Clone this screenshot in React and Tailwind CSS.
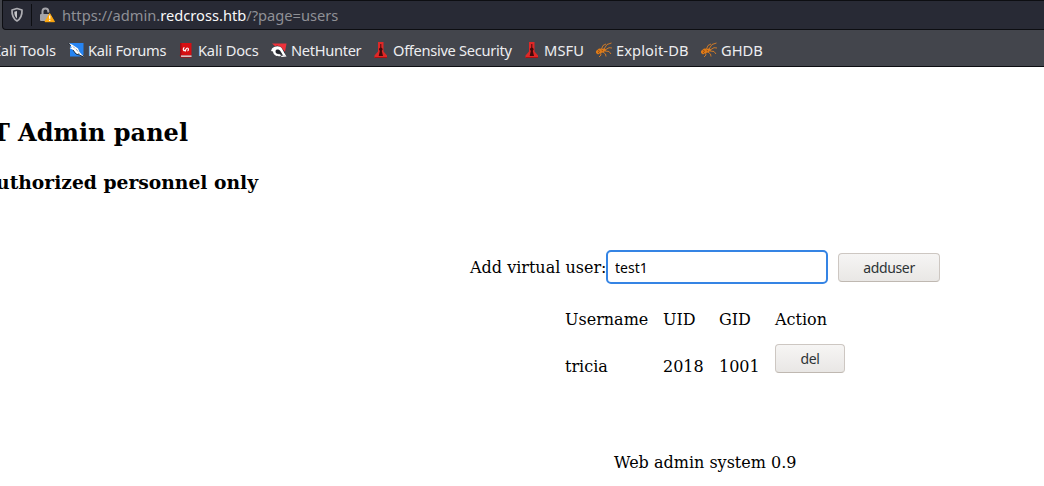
const DragonIcon = () => (
  <svg width="16" height="16" viewBox="0 0 16 16">
    <path d="M2 1h13.500v11.500l-2 2H2z" fill="#2684f2" />
    <path d="M0 1l4 1.500 6 4 1.500 3.500L16 15l-4.500-2.300-3.500-1-3-4-3.500-1.700 2.500-.5L0 1z" fill="#fff" />
    <path d="M0 1.200l3 2.600M5 8l3 4 3.500 1L15.500 15" stroke="#1b2430" strokeWidth=".9" fill="none" />
    <path d="M5 4.500l2 2M8 7l2 2.500M10 11l2 1.500" stroke="#62717f" strokeWidth=".7" fill="none" />
  </svg>
);

const DocsIcon = () => (
  <svg width="16" height="16" viewBox="0 0 16 16">
    <path d="M2 1h11.500v12.500H2z" fill="#d70f13" />
    <path d="M2 1h1.500v12.500H2z" fill="#9d0d16" />
    <path d="M3 13.500h10.500v1.500H3z" fill="#eee1e1" />
    <path d="M2 13.500l1 1.800h10.500" stroke="#b20b12" strokeWidth=".8" fill="none" />
    <path d="M6.500 5.500C4.800 6 5 8.800 6.600 8.600 8.200 8.400 7.800 6 9.200 6c1.600 0 1.600 2.700.2 3M8 9.200L6.500 8" stroke="#fff" strokeWidth="1.200" fill="none" />
  </svg>
);

const HunterIcon = () => (
  <svg width="16" height="16" viewBox="0 0 16 16">
    <path d="M1 1.500h14.500l-2 11z" fill="#ee323b" />
    <path d="M3 5l3-1.500 4 1.500 4 5v3l-4-1-5-1z" fill="#23252c" />
    <path d="M1 6.500C5 3 10 4 11.500 7.500L14.500 13l-2.300.8-2.500-4.300C8 6.800 4.500 7.200 4.500 9.500c0 2.200 2 3 4.500 2.700l1 1.800c-4.200.8-7.700-.8-8-4.500L0 9z" fill="#fff" />
    <path d="M10 14l4.500-1 1 1.500-5 .5z" fill="#fff" />
  </svg>
);

const TowerIcon = () => (
  <svg width="16" height="16" viewBox="0 0 16 16">
    <path d="M5 0h5.500v9.500l3.500 4V16H1.500v-2.500L5 9.500z" fill="#df2827" />
    <path d="M7.300 2h1v3.500l1.500 1.500-1 2 1.200 5H5.700l1.100-5-1-2 1.500-1.500z" fill="#430909" />
    <path d="M1.500 15.500H14" stroke="#aa1013" />
  </svg>
);

const BugIcon = () => (
  <svg width="16" height="16" viewBox="0 0 16 16" fill="none">
    <path d="M0 9l3-2.500 3 .2 3-.2 1 2-3 2-3 .7L2 12.500 0 11z" fill="#dd7b19" />
    <path d="M5.500 7L7 3.500 10 2M8 7l3-4.500 4.500-1.500M9 8l4-2.300 3 .3M9 9l4 .5 2 2.500M7 10l2.500 2 .5 2.500M4.500 10.500l.5 2.500-2 2" stroke="#dd7f24" strokeWidth=".9" />
    <path d="M2 8.500l2 1M5.500 8l1.500 1M2 11l1-1" stroke="#8c430c" strokeWidth=".8" />
  </svg>
);

const ShieldIcon = () => (
  <svg width="14" height="16" viewBox="0 0 14 16" fill="none">
    <path d="M7 1.500L12 3c.2 5-.8 8.500-5 11C2.800 11.500 1.800 8 2 3z" stroke="#aeaeb3" strokeWidth="1.700" strokeLinejoin="round" />
    <path d="M7 4v7.500C5 10 4.300 8 4.300 4.700z" fill="#c4c4c7" />
  </svg>
);

const LockIcon = () => (
  <svg width="16" height="16" viewBox="0 0 16 16" fill="none">
    <path d="M3.500 8V4.300a2.900 2.900 0 015.800 0V5.500" stroke="#a5a5aa" strokeWidth="2" />
    <path d="M2 7h8v7H2a1 1 0 01-1-1V8a1 1 0 011-1z" fill="#a5a5aa" />
    <path d="M10.700 6.500L15.500 14.700H6z" fill="#ffa910" stroke="#ffa910" strokeLinejoin="round" />
    <path d="M10.700 8.500v3.200M10.700 12.700v1.400" stroke="#fff" strokeWidth="1.300" />
  </svg>
);

const bookmarks = [
  { label: "Kali Forums", Icon: DragonIcon, style: "w-[110px] tracking-[-0.25px]" },
  { label: "Kali Docs", Icon: DocsIcon, style: "w-[93px] tracking-[-0.2px]" },
  { label: "NetHunter", Icon: HunterIcon, style: "w-[102px] tracking-[-0.33px]" },
  { label: "Offensive Security", Icon: TowerIcon, style: "w-[151px] tracking-[-0.31px]" },
  { label: "MSFU", Icon: TowerIcon, style: "w-[72px] tracking-[0.1px]" },
  { label: "Exploit-DB", Icon: BugIcon, style: "w-[105px] tracking-[0.1px]" },
  { label: "GHDB", Icon: BugIcon, style: "w-[70px]" },
];

function BrowserChrome() {
  return (
    <header className="flex h-[67px] flex-col border-b border-[#0d0e12] bg-[#43454c] pl-[2px] font-['Noto_Sans',sans-serif] text-[14.67px]">
      <div className="flex h-[30px] shrink-0 items-center rounded-bl-[4px] border border-r-0 border-[#0d0e12] bg-[#282a35] pl-[7px]">
        <ShieldIcon />
        <div className="ml-[7px] h-[22px] w-px bg-[#0d0e12]" />
        <div className="ml-[7px]">
          <LockIcon />
        </div>
        <p className="ml-[7px] whitespace-pre leading-5 text-[#8f9096]">
          https://admin.<span className="text-[#f9f9fa]">redcross.htb</span>/?page=users
        </p>
      </div>
      <nav className="flex h-[36px] items-center pt-[3px] leading-5 text-[#ededf0]">
        <div className="flex w-[54px] shrink-0 justify-end whitespace-nowrap">Kali Tools</div>
        <div className="ml-[12px] flex">
          {bookmarks.map(({ label, Icon, style }) => (
            <a key={label} className={`flex shrink-0 items-center gap-1 whitespace-nowrap ${style}`}>
              <span className="shrink-0 pt-px">
                <Icon />
              </span>
              {label}
            </a>
          ))}
        </div>
      </nav>
    </header>
  );
}

const buttonStyle =
  "h-[29px] rounded-[4px] border border-[#cdc7c2] border-b-[#bfb8b1] bg-linear-to-b from-[#f6f5f4] to-[#e9e7e5] font-['Noto_Sans',sans-serif] text-[14px] tracking-[-0.35px] text-[#2e3436]";

export default function App() {
  return (
    <div className="h-[486px] w-[1044px] overflow-hidden bg-white font-['DejaVu_Serif',serif] text-base text-black">
      <BrowserChrome />
      <main className="pt-[52px]">
        <h2 className="flex w-[188px] justify-end whitespace-nowrap text-[24px] font-bold leading-[28px]">IT Admin panel</h2>
        <h3 className="mt-[24px] flex w-[258px] justify-end whitespace-nowrap text-[18.72px] font-bold leading-[22px]">Authorized personnel only</h3>
        <form className="mt-[57px] flex items-center pl-[470px]">
          <label className="w-[136px] whitespace-nowrap pt-[2px]">Add virtual user:</label>
          <input
            className="h-[34px] w-[222px] rounded-[5px] border-2 border-[#3584e4] bg-white pl-[7px] font-['Noto_Sans',sans-serif] text-[14px] outline-none"
            defaultValue="test1"
          />
          <button type="button" className={`ml-[10px] w-[102px] pt-px ${buttonStyle}`}>adduser</button>
        </form>
        <div className="mt-[26px] grid grid-cols-[98px_56px_56px_80px] pl-[565px] leading-[20px]">
          <span>Username</span>
          <span>UID</span>
          <span>GID</span>
          <span>Action</span>
          <span className="pt-[27px]">tricia</span>
          <span className="pt-[27px]">2018</span>
          <span className="pt-[27px]">1001</span>
          <div className="pt-[14px]">
            <button type="button" className={`block w-[70px] ${buttonStyle}`}>del</button>
          </div>
        </div>
        <p className="mt-[76px] pl-[614px] leading-[20px]">Web admin system 0.9</p>
      </main>
    </div>
  );
}
